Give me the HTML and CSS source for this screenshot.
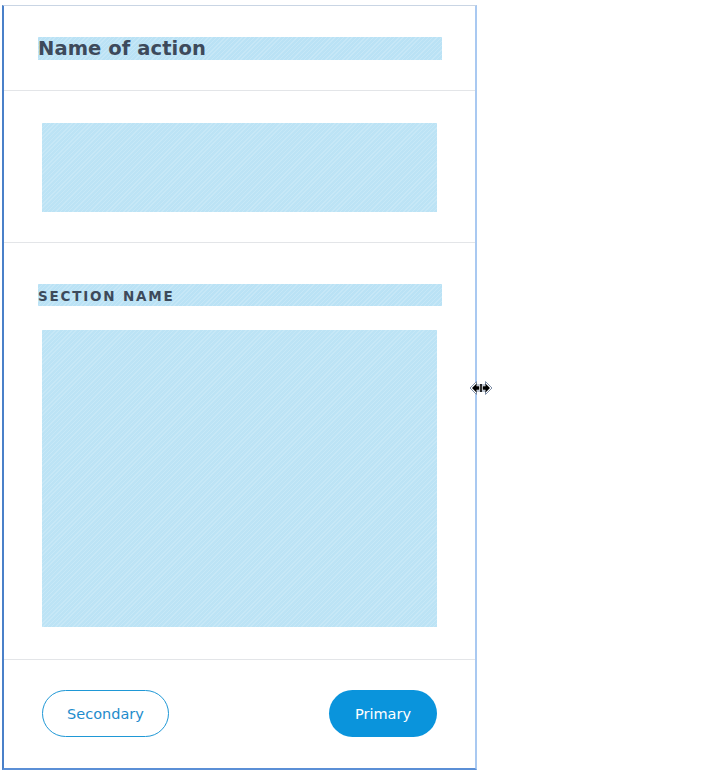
FILE: index.html
```html
<!DOCTYPE html>
<html>
<head>
<meta charset="utf-8">
<link rel="stylesheet" href="styles.css">
</head>
<body>
<div class="panel">
  <div class="header">
    <div class="title hl">Name of action</div>
  </div>
  <div class="sec1">
    <div class="block b1"></div>
  </div>
  <div class="sec2">
    <div class="sname hl">SECTION NAME</div>
    <div class="block b2"></div>
  </div>
  <div class="footer">
    <button class="btn sec">Secondary</button>
    <button class="btn pri">Primary</button>
  </div>
</div>
<svg class="cursor" width="24" height="18" viewBox="0 0 24 18">
  <path d="M1 9 L7.5 2.5 L7.5 6 L16.5 6 L16.5 2.5 L23 9 L16.5 15.5 L16.5 12 L7.5 12 L7.5 15.5 Z" fill="#fff" stroke="#8090a8" stroke-width="1"/>
  <path d="M3 9 L7.5 4.5 L7.5 7.2 L10.3 7.2 L10.3 10.8 L7.5 10.8 L7.5 13.5 Z" fill="#000"/>
  <path d="M21 9 L16.5 4.5 L16.5 7.2 L13.7 7.2 L13.7 10.8 L16.5 10.8 L16.5 13.5 Z" fill="#000"/>
  <rect x="11.2" y="5" width="1.6" height="8" fill="#000"/>
</svg>
</body>
</html>
```
FILE: styles.css
```css
html, body { margin: 0; padding: 0; background: #fff; }
body { position: relative; width: 713px; height: 772px; font-family: "DejaVu Sans", Verdana, sans-serif; }
.panel {
  margin: 5px 0 0 2px;
  width: 475px;
  height: 765px;
  border-top: 1px solid #c9d5e4;
  border-left: 2px solid #4a80c9;
  border-right: 2px solid #a9c9f1;
  border-bottom: 2px solid #5b8fd6;
  box-sizing: border-box;
  display: flex;
  flex-direction: column;
}
.hl {
  background: #bae2f5 repeating-linear-gradient(135deg, rgba(255,255,255,0.18) 0 1px, rgba(255,255,255,0) 1px 3px);
  color: #3d4a5b;
  font-weight: bold;
  width: 404px;
}
.header { height: 85px; padding: 31px 0 0 34px; box-sizing: border-box; border-bottom: 1px solid #e3e5e8; }
.title { height: 23px; font-size: 19.5px; line-height: 24px; letter-spacing: 0.1px; }
.sec1 { height: 152px; padding: 32px 0 0 38px; box-sizing: border-box; border-bottom: 1px solid #e3e5e8; }
.block {
  width: 395px;
  background: #bce3f5 repeating-linear-gradient(135deg, rgba(255,255,255,0.16) 0 1px, rgba(255,255,255,0) 1px 3px);
}
.b1 { height: 89px; }
.sec2 { height: 417px; padding: 41px 0 0 34px; box-sizing: border-box; border-bottom: 1px solid #e3e5e8; }
.sname { height: 22px; font-size: 13.5px; line-height: 24px; letter-spacing: 1.8px; margin-bottom: 24px; }
.b2 { height: 297px; margin-left: 4px; }
.footer { flex: 1; display: flex; justify-content: space-between; align-items: flex-start; padding: 30px 38px 0 38px; }
.btn {
  height: 47px;
  border-radius: 24px;
  font-family: "DejaVu Sans", Verdana, sans-serif;
  font-size: 14.5px;
  box-sizing: border-box;
  cursor: pointer;
}
.sec { width: 127px; background: #fff; border: 1px solid #1f98d6; color: #1e8ccc; }
.pri { width: 108px; background: #0a94dc; border: none; color: #fff; }
.cursor { position: absolute; left: 469px; top: 379px; }
```
